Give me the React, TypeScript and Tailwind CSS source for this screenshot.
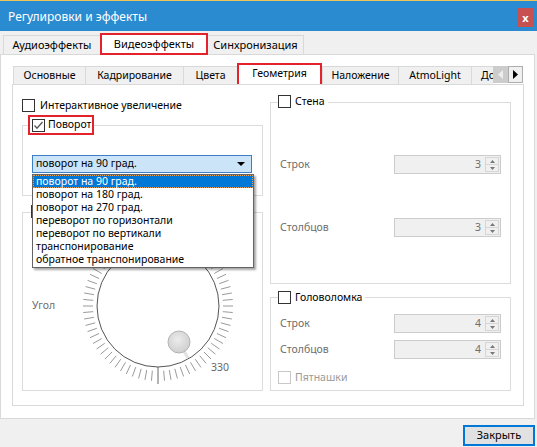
import React from "react";

const items = [
  "поворот на 90 град.",
  "поворот на 180 град.",
  "поворот на 270 град.",
  "переворот по горизонтали",
  "переворот по вертикали",
  "транспонирование",
  "обратное транспонирование",
];

function Box({ checked = false, disabled = false }: { checked?: boolean; disabled?: boolean }) {
  return (
    <span
      className={`flex h-[13px] w-[13px] shrink-0 items-center justify-center border bg-white ${
        disabled ? "border-[#c8c8c8]" : "border-[#333333]"
      }`}
    >
      {checked && (
        <svg width="11" height="11" viewBox="0 0 11 11">
          <path d="M1.5 5.5 L4 8.2 L9.5 2" fill="none" stroke="#555" strokeWidth="1.3" />
        </svg>
      )}
    </span>
  );
}

function Spin({ value }: { value: number }) {
  return (
    <div className="flex h-[19px] w-[107px] border border-[#cccccc] bg-[#f0f0f0]">
      <span className="flex-1 pr-[4px] text-right leading-[17px] text-[#6d6d6d]">{value}</span>
      <div className="my-[1px] mr-[1px] flex w-[14px] flex-col border border-[#d6d6d6] bg-[#f0f0f0]">
        <span className="flex flex-1 items-center justify-center border-b border-[#d6d6d6]">
          <svg width="5" height="3" viewBox="0 0 5 3">
            <path d="M0 3 L2.5 0 L5 3Z" fill="#777" />
          </svg>
        </span>
        <span className="flex flex-1 items-center justify-center">
          <svg width="5" height="3" viewBox="0 0 5 3">
            <path d="M0 0 L5 0 L2.5 3Z" fill="#777" />
          </svg>
        </span>
      </div>
    </div>
  );
}

function Dial() {
  const c = 82;
  const ticks = [];
  for (let a = 5; a < 360; a += 5) {
    const r = (a * Math.PI) / 180;
    const sx = Math.sin(r);
    const sy = Math.cos(r);
    ticks.push(
      <line
        key={a}
        x1={c + 65 * sx}
        y1={c + 65 * sy}
        x2={c + 75 * sx}
        y2={c + 75 * sy}
        stroke="#9a9a9a"
        strokeWidth="1"
      />
    );
  }
  return (
    <svg width="164" height="164" viewBox="0 0 164 164">
      <defs>
        <radialGradient id="knob" cx="45%" cy="40%" r="60%">
          <stop offset="0%" stopColor="#ececec" />
          <stop offset="100%" stopColor="#cfcfcf" />
        </radialGradient>
      </defs>
      {ticks}
      <line x1={c} y1={c + 61} x2={c} y2={c + 78} stroke="#666" strokeWidth="1" />
      <circle cx={c} cy={c} r="61" fill="none" stroke="#555" strokeWidth="1" />
      <line x1={c + 26} y1={c + 45} x2={c + 30} y2={c + 52} stroke="#e2e2e2" strokeWidth="3" />
      <circle cx={c + 21} cy={c + 36} r="11" fill="url(#knob)" stroke="#b4b4b4" strokeWidth="1" />
      <text x={c + 53} y={c + 65} fontSize="10.5" fill="#666" fontFamily="Noto Sans, sans-serif">
        330
      </text>
    </svg>
  );
}

function Tab({ label, w }: { label: string; w: string }) {
  return (
    <div
      className={`${w} flex h-[18px] shrink-0 items-center justify-center border-l border-t border-[#d9d9d9] bg-[#f0f0f0] whitespace-nowrap`}
    >
      {label}
    </div>
  );
}

export default function App() {
  return (
    <div className="flex h-[447px] w-[537px] flex-col overflow-hidden bg-[#f0f0f0] font-['Noto_Sans',sans-serif] text-[10.5px] text-black">
      <div className="h-px bg-[#efc45c]" />
      <div className="flex h-[30px] items-start justify-between bg-[#2b8bd0] pl-[8px] pr-[3px]">
        <span className="mt-[7px] text-[12px] text-white">Регулировки и эффекты</span>
        <span className="mt-[7px] flex h-[19px] w-[17px] items-center justify-center bg-[#c75050] text-[11px] font-bold leading-none text-white">
          x
        </span>
      </div>

      <div className="flex h-[23px] items-end pl-[3px] text-[11px]">
        <div className="flex h-[19px] w-[97px] items-center justify-center border-l border-t border-[#d9d9d9] bg-[#f0f0f0]">
          Аудиоэффекты
        </div>
        <div className="relative z-10 -mb-[1px] flex h-[22px] w-[108px] items-center justify-center border-2 border-[#e3222b] bg-white">
          Видеоэффекты
        </div>
        <div className="flex h-[19px] w-[96px] items-center justify-center border-r border-t border-[#d9d9d9] bg-[#f0f0f0]">
          Синхронизация
        </div>
      </div>

      <div className="h-[365px] w-[535px] border border-[#d9d9d9] bg-white pl-[11px] pt-[8px]">
        <div className="flex h-[21px] items-end pl-[1px]">
          <div className="flex w-[480px] items-end overflow-hidden">
            <Tab label="Основные" w="w-[72px]" />
            <Tab label="Кадрирование" w="w-[98px]" />
            <Tab label="Цвета" w="w-[54px]" />
            <div className="relative z-10 -mb-[3px] flex h-[24px] w-[85px] shrink-0 items-center justify-center border-2 border-[#e3222b] bg-white pb-[3px]">
              Геометрия
            </div>
            <Tab label="Наложение" w="w-[76px]" />
            <Tab label="AtmoLight" w="w-[73px]" />
            <Tab label="Дополнительно" w="w-[100px]" />
          </div>
          <div className="mb-[1px] flex h-[17px] w-[15px] items-center justify-center bg-[#cccccc]">
            <svg width="5" height="9" viewBox="0 0 5 9">
              <path d="M5 0 L0 4.5 L5 9Z" fill="#eeeeee" />
            </svg>
          </div>
          <div className="mb-[1px] flex h-[17px] w-[15px] items-center justify-center border border-[#adadad] bg-[#f0f0f0]">
            <svg width="5" height="9" viewBox="0 0 5 9">
              <path d="M0 0 L5 4.5 L0 9Z" fill="#000" />
            </svg>
          </div>
        </div>

        <div className="flex h-[322px] w-[512px] gap-[7px] border border-[#d9d9d9] pl-[9px] pt-[10px]">
          {/* left column */}
          <div className="flex w-[241px] flex-col pt-[4px]">
            <div className="flex h-[13px] items-center gap-[5px]">
              <Box />
              <span>Интерактивное увеличение</span>
            </div>

            <div className="mt-[13px] h-[71px] border border-[#dcdcdc]">
              <div className="-mt-[11px] ml-[5px] flex h-[20px] w-[66px] items-center gap-[3px] border-2 border-[#e3222b] bg-white pl-[2px]">
                <Box checked />
                <span>Поворот</span>
              </div>
              <div className="relative ml-[9px] mt-[20px] w-[220px]">
                <div className="flex h-[18px] items-center justify-between border border-[#3c7fc7] bg-[#cce4f7] pl-[3px] pr-[6px]">
                  <span>поворот на 90 град.</span>
                  <svg width="8" height="4" viewBox="0 0 8 4">
                    <path d="M0 0 H8 L4 4Z" fill="#000" />
                  </svg>
                </div>
                <div className="absolute left-0 top-[19px] z-20 w-[222px] border border-[#646464] bg-white pb-px shadow-[2px_2px_2px_rgba(0,0,0,0.35)]">
                  {items.map((t, i) =>
                    i === 0 ? (
                      <div
                        key={t}
                        className="h-[13px] border border-dotted border-[#e0a060] bg-[#0078d7] pl-[2px] leading-[11px] text-white"
                      >
                        {t}
                      </div>
                    ) : (
                      <div key={t} className="h-[13px] pl-[3px] leading-[13px]">
                        {t}
                      </div>
                    )
                  )}
                </div>
              </div>
            </div>

            <div className="mt-[16px] h-[179px] border border-[#dcdcdc]">
              <div className="-mt-[8px] ml-[8px] flex h-[13px] w-fit items-center bg-white pr-[2px]">
                <Box />
              </div>
              <div className="mt-[6px] flex items-center pl-[9px]">
                <span className="w-[44px] text-[#6d6d6d]">Угол</span>
                <Dial />
              </div>
            </div>
          </div>

          {/* right column */}
          <div className="flex w-[241px] flex-col">
            <div className="mt-[7px] h-[182px] border border-[#dcdcdc]">
              <div className="-mt-[8px] ml-[7px] flex h-[13px] w-fit items-center gap-[4px] bg-white pr-[3px]">
                <Box />
                <span>Стена</span>
              </div>
              <div className="mt-[47px] flex items-center pl-[9px]">
                <span className="w-[114px] text-[#6d6d6d]">Строк</span>
                <Spin value={3} />
              </div>
              <div className="mt-[44px] flex items-center pl-[9px]">
                <span className="w-[114px] text-[#6d6d6d]">Столбцов</span>
                <Spin value={3} />
              </div>
            </div>

            <div className="mt-[13px] h-[94px] border border-[#dcdcdc]">
              <div className="-mt-[7px] ml-[7px] flex h-[13px] w-fit items-center gap-[4px] bg-white pr-[3px]">
                <Box />
                <span>Головоломка</span>
              </div>
              <div className="mt-[10px] flex items-center pl-[9px]">
                <span className="w-[114px] text-[#6d6d6d]">Строк</span>
                <Spin value={4} />
              </div>
              <div className="mt-[7px] flex items-center pl-[9px]">
                <span className="w-[114px] text-[#6d6d6d]">Столбцов</span>
                <Spin value={4} />
              </div>
              <div className="ml-[7px] mt-[12px] flex h-[13px] items-center gap-[4px]">
                <Box disabled />
                <span className="text-[#9a9a9a]">Пятнашки</span>
              </div>
            </div>
          </div>
        </div>
      </div>

      <div className="flex flex-1 items-start justify-end pr-[2px] pt-[6px]">
        <div className="flex h-[21px] w-[72px] items-center justify-center border-2 border-[#0078d7] bg-[#e1e1e1] text-[11px]">
          Закрыть
        </div>
      </div>
    </div>
  );
}
